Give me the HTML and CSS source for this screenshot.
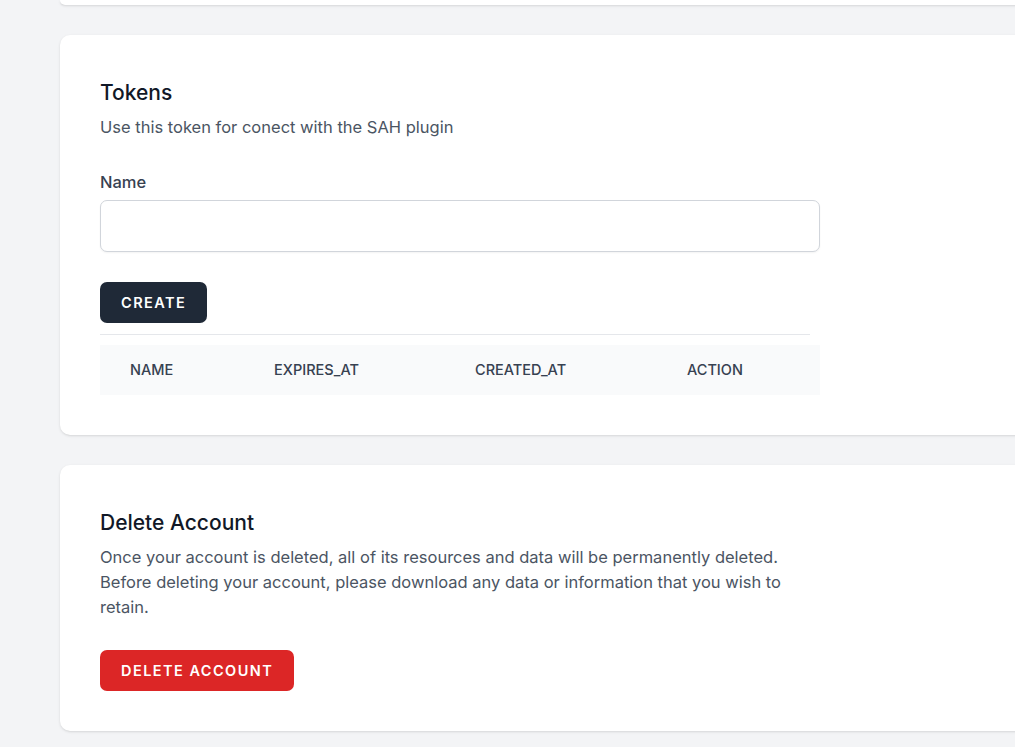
FILE: index.html
```html
<!DOCTYPE html>
<html lang="en">
<head>
<meta charset="utf-8">
<title>Profile</title>
<link rel="stylesheet" href="styles.css">
</head>
<body>
<main class="page">
  <div class="card card-stub"></div>

  <section class="card">
    <div class="content">
      <h2 class="title">Tokens</h2>
      <p class="desc">Use this token for conect with the SAH plugin</p>
      <form class="form">
        <label class="label" for="name">Name</label>
        <input class="input" id="name" type="text">
        <button class="btn btn-dark" type="button">Create</button>
      </form>
      <div class="divider"></div>
      <table class="table">
        <thead>
          <tr>
            <th class="c1">Name</th>
            <th class="c2">Expires_at</th>
            <th class="c3">Created_at</th>
            <th class="c4">Action</th>
          </tr>
        </thead>
      </table>
    </div>
  </section>

  <section class="card">
    <div class="content">
      <h2 class="title">Delete Account</h2>
      <p class="desc">Once your account is deleted, all of its resources and data will be permanently deleted. Before deleting your account, please download any data or information that you wish to retain.</p>
      <button class="btn btn-red btn-spaced" type="button">Delete Account</button>
    </div>
  </section>
</main>
</body>
</html>
```

FILE: styles.css
```css
html, body {
  margin: 0;
  padding: 0;
}
body {
  background: #f3f4f6;
  font-family: "Inter", "Liberation Sans", sans-serif;
  overflow: hidden;
  height: 747px;
}
.page {
  display: flex;
  flex-direction: column;
  gap: 30px;
  padding-left: 60px;
}
.card {
  width: 1000px;
  background: #fff;
  border-radius: 10px;
  box-shadow: 0 1px 3px rgba(0,0,0,0.1), 0 1px 2px -1px rgba(0,0,0,0.1);
  padding: 40px;
  box-sizing: border-box;
}
.card-stub {
  height: 5px;
  padding: 0;
  border-radius: 0 0 10px 10px;
}
.content {
  width: 720px;
}
.title {
  margin: 0;
  font-size: 21px;
  line-height: 35px;
  font-weight: 450;
  color: #111827;
}
.desc {
  margin: 5px 0 0;
  font-size: 16.5px;
  line-height: 25px;
  color: #4b5563;
}
.form {
  margin-top: 30px;
  display: flex;
  flex-direction: column;
  align-items: flex-start;
}
.label {
  font-size: 16.5px;
  line-height: 25px;
  font-weight: 450;
  color: #374151;
}
.input {
  margin-top: 5px;
  width: 720px;
  height: 52px;
  box-sizing: border-box;
  border: 1px solid #d1d5db;
  border-radius: 7px;
  box-shadow: 0 1px 2px rgba(0,0,0,0.05);
  background: #fff;
  font: inherit;
}
.btn {
  display: inline-flex;
  align-items: center;
  height: 41px;
  padding: 0 20px;
  border: 0;
  border-radius: 7px;
  color: #fff;
  font-family: inherit;
  font-size: 14.5px;
  font-weight: 600;
  letter-spacing: 0.1em;
  text-transform: uppercase;
}
.form .btn {
  margin-top: 30px;
  padding: 0 21px;
}
.btn-dark {
  background: #1f2937;
}
.btn-red {
  background: #dc2626;
}
.btn-spaced {
  margin-top: 30px;
  padding: 0 21px;
}
.divider {
  margin-top: 11px;
  width: 710px;
  border-top: 1px solid #e5e7eb;
}
.table {
  margin-top: 10px;
  width: 720px;
  border-collapse: collapse;
  table-layout: fixed;
}
.table th {
  background: #f9fafb;
  padding: 15px 0 15px 30px;
  text-align: left;
  font-size: 14.5px;
  line-height: 20px;
  font-weight: 500;
  color: #374151;
  text-transform: uppercase;
}
.c1 { width: 114px; }
.c2 { width: 171px; }
.c3 { width: 182px; }
.c4 { width: 133px; }
```
